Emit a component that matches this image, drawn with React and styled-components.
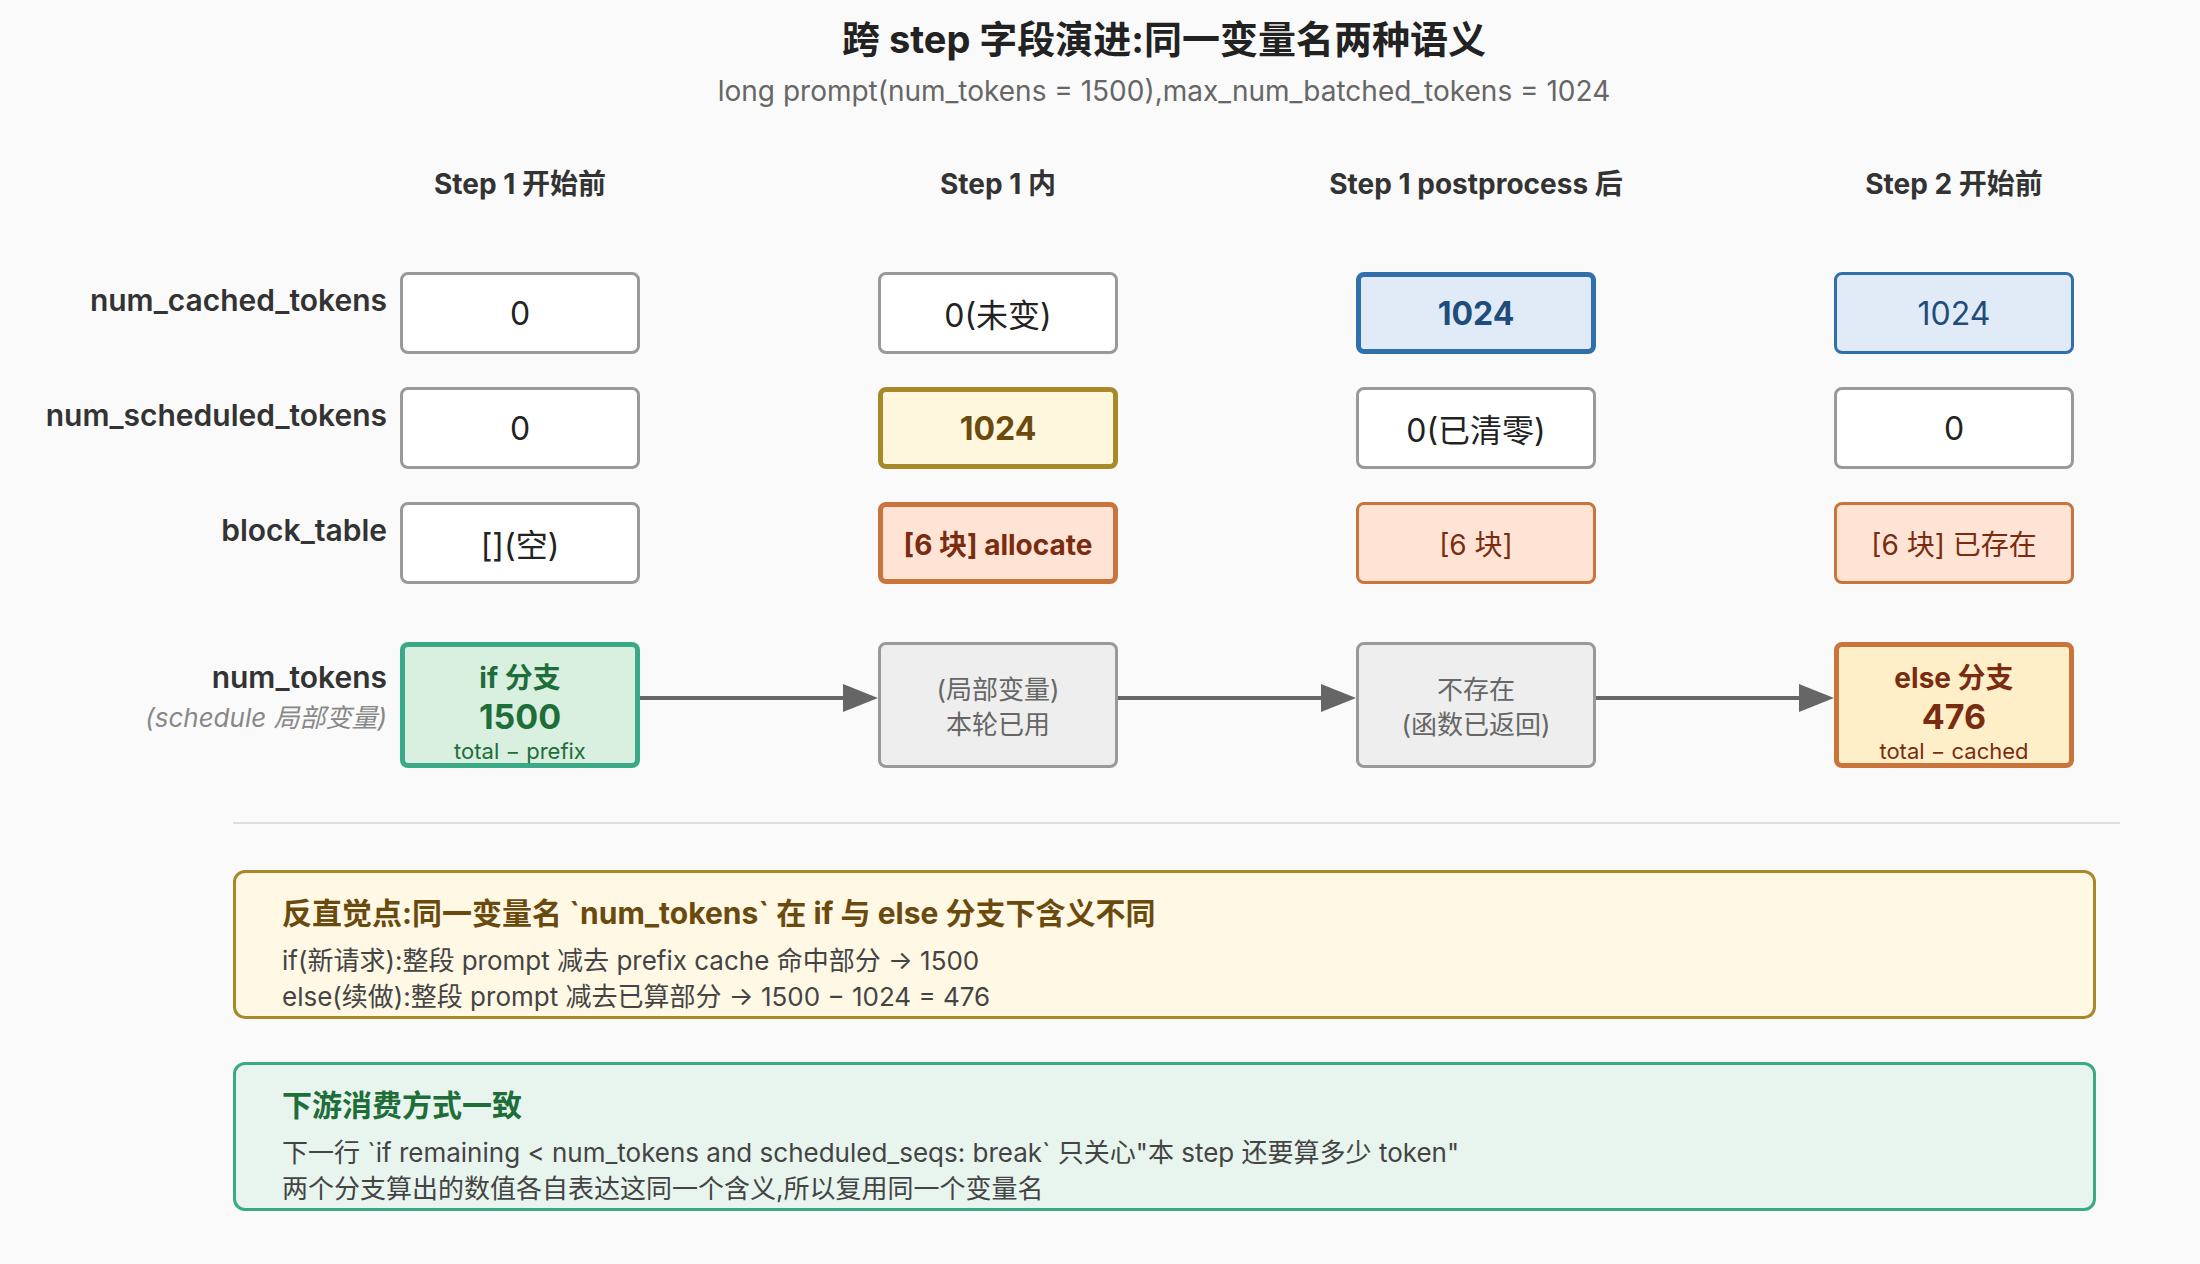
import React from 'react'
import styled, { createGlobalStyle } from 'styled-components'

const GlobalStyle = createGlobalStyle`
  html, body {
    margin: 0;
    padding: 0;
    background: #fafafa;
  }
  body {
    font-family: Inter, 'Noto Sans CJK SC', sans-serif;
    color: #333;
  }
`

// label column, then box / gap / box / gap ...
const COLS = '400px 240px 238px 240px 238px 240px 238px 240px'

const tones = {
  plain: { bg: '#ffffff', border: '#999999', color: '#222222' },
  blue: { bg: '#e1ebf8', border: '#2f6fac', color: '#1e4d7b' },
  yellow: { bg: '#fff7dd', border: '#a8892a', color: '#6b4a0e' },
  orange: { bg: '#ffe3d5', border: '#c8743a', color: '#7a2c10' },
  green: { bg: '#d9efe0', border: '#3aaa86', color: '#1e6e3a' },
  amber: { bg: '#ffefc8', border: '#c8743a', color: '#7a2c10' },
  gray: { bg: '#eeeeee', border: '#999999', color: '#666666' },
}

const Page = styled.div`
  width: 2200px;
  min-height: 1264px;
  box-sizing: border-box;
  padding-top: 16px;
  display: flex;
  flex-direction: column;
`

const Heading = styled.header`
  display: flex;
  flex-direction: column;
  align-items: center;
  padding-left: 128px;
`

const Title = styled.h1`
  margin: 0;
  font-size: 38px;
  line-height: 46px;
  font-weight: 700;
  color: #222;
`

const Subtitle = styled.p`
  margin: 11px 0 0;
  font-size: 28px;
  line-height: 36px;
  color: #666;
`

const Row = styled.div`
  display: grid;
  grid-template-columns: ${COLS};
  margin-top: ${(p) => p.$top}px;
  height: ${(p) => p.$h}px;
`

const ColHead = styled.div`
  grid-column: ${(p) => p.$col};
  display: flex;
  align-items: center;
  justify-content: center;
  font-size: 28px;
  font-weight: 700;
  color: #333;
  white-space: nowrap;
`

const Label = styled.div`
  grid-column: 1;
  padding: ${(p) => p.$pt}px 13px 0 0;
  text-align: right;
  white-space: nowrap;
`

const LabelMain = styled.div`
  font-size: 30px;
  line-height: 36px;
  font-weight: 600;
  color: #333;
`

const LabelNote = styled.div`
  margin-top: 5px;
  font-size: 26px;
  line-height: 36px;
  font-style: italic;
  color: #888;
`

const Box = styled.div`
  grid-column: ${(p) => p.$col};
  box-sizing: border-box;
  height: 100%;
  border: ${(p) => (p.$strong ? 5 : 3)}px solid ${(p) => tones[p.$tone].border};
  border-radius: 8px;
  background: ${(p) => tones[p.$tone].bg};
  color: ${(p) => tones[p.$tone].color};
  font-size: ${(p) => p.$size || 32}px;
  font-weight: ${(p) => (p.$strong ? 700 : 400)};
  display: flex;
  flex-direction: column;
  align-items: center;
  justify-content: center;
  white-space: nowrap;
`

const BranchBox = styled(Box)`
  justify-content: flex-start;
  padding-top: 14px;
`

const BranchName = styled.div`
  font-size: 28px;
  line-height: 34px;
  font-weight: 700;
`

const BranchValue = styled.div`
  font-size: 34px;
  line-height: 44px;
  font-weight: 700;
`

const BranchFormula = styled.div`
  font-size: 22px;
  line-height: 24px;
  font-weight: 400;
`

const StateLine = styled.div`
  font-size: 26px;
  line-height: 35px;
`

const StateBox = styled(Box)`
  padding-top: 4px;
`

const ArrowCell = styled.div`
  grid-column: ${(p) => p.$col};
  display: flex;
  align-items: stretch;
`

const Divider = styled.hr`
  margin: 58px 0 0 233px;
  width: 1887px;
  height: 2px;
  border: 0;
  background: #dddddd;
`

const Callout = styled.section`
  box-sizing: border-box;
  margin: ${(p) => p.$top}px 0 0 233px;
  width: 1863px;
  height: 149px;
  padding: 21px 0 0 46px;
  border: 3px solid ${(p) => (p.$tone === 'green' ? '#3aaa86' : '#a8892a')};
  border-radius: 12px;
  background: ${(p) => (p.$tone === 'green' ? '#e8f4ee' : '#fff8e5')};
`

const CalloutTitle = styled.h2`
  margin: 0;
  font-size: 30px;
  line-height: 38px;
  font-weight: 700;
  color: ${(p) => (p.$tone === 'green' ? '#1e6e3a' : '#6b4a0e')};
`

const CalloutBody = styled.div`
  margin-top: 11px;
  font-size: 26px;
  line-height: 36px;
  color: #444;
`

const Arrow = () => (
  <svg width="238" height="122" viewBox="0 0 238 122">
    <line x1="0" y1="56" x2="206" y2="56" stroke="#666" strokeWidth="4" />
    <polygon points="203,42 238,56 203,70" fill="#666" />
  </svg>
)

const steps = ['Step 1 开始前', 'Step 1 内', 'Step 1 postprocess 后', 'Step 2 开始前']

const fields = [
  {
    name: 'num_cached_tokens',
    cells: [
      { text: '0', tone: 'plain' },
      { text: '0(未变)', tone: 'plain' },
      { text: '1024', tone: 'blue', strong: true },
      { text: '1024', tone: 'blue' },
    ],
  },
  {
    name: 'num_scheduled_tokens',
    cells: [
      { text: '0', tone: 'plain' },
      { text: '1024', tone: 'yellow', strong: true },
      { text: '0(已清零)', tone: 'plain' },
      { text: '0', tone: 'plain' },
    ],
  },
  {
    name: 'block_table',
    cells: [
      { text: '[](空)', tone: 'plain' },
      { text: '[6 块] allocate', tone: 'orange', strong: true, size: 28 },
      { text: '[6 块]', tone: 'orange', size: 28 },
      { text: '[6 块] 已存在', tone: 'orange', size: 28 },
    ],
  },
]

const App = () => {
  return (
    <Page>
      <GlobalStyle />
      <Heading>
        <Title>跨 step 字段演进:同一变量名两种语义</Title>
        <Subtitle>long prompt(num_tokens = 1500),max_num_batched_tokens = 1024</Subtitle>
      </Heading>

      <Row $top={53} $h={40}>
        {steps.map((s, i) => (
          <ColHead key={s} $col={2 + i * 2}>
            {s}
          </ColHead>
        ))}
      </Row>

      {fields.map((f, r) => (
        <Row key={f.name} $top={r === 0 ? 70 : 33} $h={82}>
          <Label $pt={10}>
            <LabelMain>{f.name}</LabelMain>
          </Label>
          {f.cells.map((c, i) => (
            <Box key={i} $col={2 + i * 2} $tone={c.tone} $strong={c.strong} $size={c.size}>
              {c.text}
            </Box>
          ))}
        </Row>
      ))}

      <Row $top={58} $h={122}>
        <Label $pt={17}>
          <LabelMain>num_tokens</LabelMain>
          <LabelNote>(schedule 局部变量)</LabelNote>
        </Label>
        <BranchBox $col={2} $tone="green" $strong>
          <BranchName>if 分支</BranchName>
          <BranchValue>1500</BranchValue>
          <BranchFormula>total − prefix</BranchFormula>
        </BranchBox>
        <ArrowCell $col={3}>
          <Arrow />
        </ArrowCell>
        <StateBox $col={4} $tone="gray">
          <StateLine>(局部变量)</StateLine>
          <StateLine>本轮已用</StateLine>
        </StateBox>
        <ArrowCell $col={5}>
          <Arrow />
        </ArrowCell>
        <StateBox $col={6} $tone="gray">
          <StateLine>不存在</StateLine>
          <StateLine>(函数已返回)</StateLine>
        </StateBox>
        <ArrowCell $col={7}>
          <Arrow />
        </ArrowCell>
        <BranchBox $col={8} $tone="amber" $strong>
          <BranchName>else 分支</BranchName>
          <BranchValue>476</BranchValue>
          <BranchFormula>total − cached</BranchFormula>
        </BranchBox>
      </Row>

      <Divider />

      <Callout $top={46} $tone="yellow">
        <CalloutTitle $tone="yellow">
          反直觉点:同一变量名 `num_tokens` 在 if 与 else 分支下含义不同
        </CalloutTitle>
        <CalloutBody>
          <div>if(新请求):整段 prompt 减去 prefix cache 命中部分 → 1500</div>
          <div>else(续做):整段 prompt 减去已算部分 → 1500 − 1024 = 476</div>
        </CalloutBody>
      </Callout>

      <Callout $top={43} $tone="green">
        <CalloutTitle $tone="green">下游消费方式一致</CalloutTitle>
        <CalloutBody>
          <div>
            下一行 `if remaining &lt; num_tokens and scheduled_seqs: break` 只关心"本 step 还要算多少 token"
          </div>
          <div>两个分支算出的数值各自表达这同一个含义,所以复用同一个变量名</div>
        </CalloutBody>
      </Callout>
    </Page>
  )
}

export default App
